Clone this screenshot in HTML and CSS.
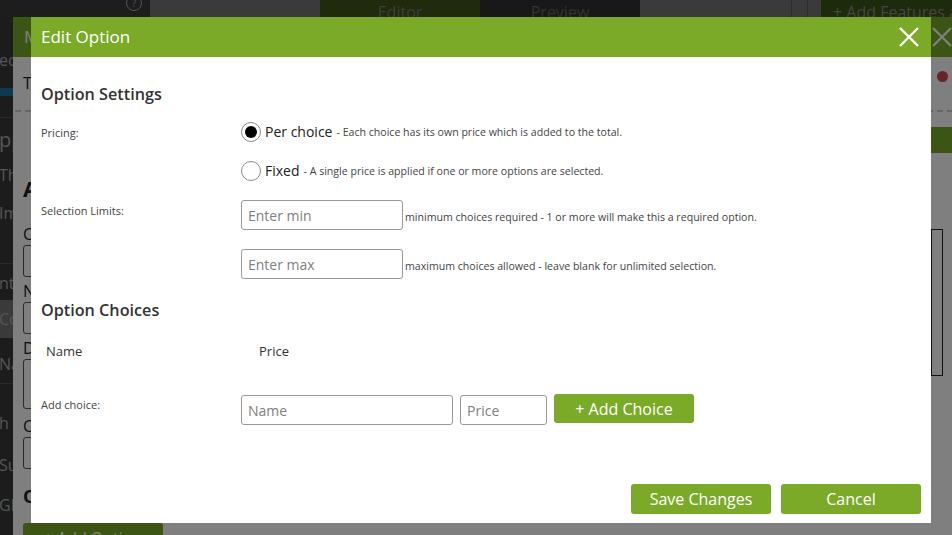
FILE: index.html
```html
<!DOCTYPE html>
<html>
<head>
    <title>Edit Option</title>
    <link rel="stylesheet" href="styles.css">
</head>
<body>
    <div class="app">
        <div class="topbar">
            <div class="brand"><span class="help">?</span></div>
            <div class="tools"></div>
            <div class="tab tab-on">Editor</div>
            <div class="tab">Preview</div>
            <div class="tools tools-split"><span></span><span></span></div>
            <div class="features">+ Add Features and more</div>
        </div>
        <div class="main">
            <div class="sidebar">
                <div class="side-item s-first">ec</div>
                <div class="side-blue"></div>
                <div class="side-line l-first"></div>
                <div class="side-item side-big">pp</div>
                <div class="side-item s-th">Th</div>
                <div class="side-item s-im">Im</div>
                <div class="side-line l-second"></div>
                <div class="side-item s-nt">nt</div>
                <div class="side-item side-on">Co</div>
                <div class="side-item s-na">Na</div>
                <div class="side-line l-third"></div>
                <div class="side-item s-h">h</div>
                <div class="side-item s-su">Su</div>
                <div class="side-item s-gl">Gl</div>
            </div>
        </div>
    </div>

    <!-- the product dialog underneath -->
    <div class="panel">
        <div class="panel-head">
            <span>Manage Product</span>
            <svg class="x-icon" viewBox="0 0 20 20"><path d="M1 1 L19 19 M19 1 L1 19"/></svg>
        </div>
        <div class="panel-body">
            <div class="panel-title">Title <i class="dot"></i></div>
            <div class="dashes"></div>
            <div class="panel-bar"></div>
            <h3>About</h3>
            <p class="p-label">Category</p>
            <div class="p-input"></div>
            <p class="p-label">Name</p>
            <div class="p-input"></div>
            <p class="p-label">Description</p>
            <div class="p-input p-area"></div>
            <p class="p-label">Currency</p>
            <div class="p-input"></div>
            <h4>Options</h4>
            <div class="p-btn">+ Add Option</div>
        </div>
        <div class="panel-box"></div>
    </div>

    <div class="shade"></div>

    <div class="modal">
        <div class="modal-head">
            <span>Edit Option</span>
            <svg class="x-icon" viewBox="0 0 20 20"><path d="M1 1 L19 19 M19 1 L1 19"/></svg>
        </div>
        <div class="modal-body">
            <h2>Option Settings</h2>

            <div class="row">
                <div class="label">Pricing:</div>
                <div class="field">
                    <label class="radio"><span class="dot-radio checked"></span><span class="big">Per choice</span><span class="hint">- Each choice has its own price which is added to the total.</span></label>
                </div>
            </div>
            <div class="row">
                <div class="label"></div>
                <div class="field">
                    <label class="radio"><span class="dot-radio"></span><span class="big">Fixed</span><span class="hint">- A single price is applied if one or more options are selected.</span></label>
                </div>
            </div>
            <div class="row">
                <div class="label">Selection Limits:</div>
                <div class="field">
                    <input class="txt limit" type="text" placeholder="Enter min"><span class="hint">minimum choices required - 1 or more will make this a required option.</span>
                </div>
            </div>
            <div class="row">
                <div class="label"></div>
                <div class="field">
                    <input class="txt limit" type="text" placeholder="Enter max"><span class="hint">maximum choices allowed - leave blank for unlimited selection.</span>
                </div>
            </div>

            <h2 class="choices-title">Option Choices</h2>

            <div class="choice-head">
                <div class="col-name">Name</div>
                <div class="col-price">Price</div>
            </div>

            <div class="row add-row">
                <div class="label">Add choice:</div>
                <div class="field add-field">
                    <input class="txt name" type="text" placeholder="Name">
                    <input class="txt price" type="text" placeholder="Price">
                    <button class="btn add-btn">+ Add Choice</button>
                </div>
            </div>
        </div>
        <div class="modal-foot">
            <button class="btn foot-btn">Save Changes</button>
            <button class="btn foot-btn">Cancel</button>
        </div>
    </div>
</body>
</html>
```

FILE: styles.css
```css
body {
    margin: 0;
    font-family: "Open Sans", "Liberation Sans", sans-serif;
    color: #333;
    background-color: #3a3a3a;
    height: 535px;
    overflow: hidden;
}

/* app behind everything */
.app {
    display: flex;
    flex-direction: column;
    height: 535px;
}
.topbar {
    display: flex;
    height: 17px;
    background-color: #747474;
    overflow: hidden;
}
.topbar > div {
    flex-shrink: 0;
}
.brand {
    width: 150px;
    background-color: #3a3a3a;
    position: relative;
}
.help {
    position: absolute;
    right: 8px;
    top: -5px;
    width: 14px;
    height: 14px;
    border: 1px solid #aaa;
    border-radius: 50%;
    color: #aaa;
    font-size: 10px;
    text-align: center;
    line-height: 14px;
}
.tools {
    width: 170px;
}
.tools-split {
    width: 168px;
    display: flex;
    justify-content: flex-end;
    gap: 15px;
    padding-right: 13px;
}
.tools-split span {
    width: 1px;
    background-color: #5a5a5a;
}
.tab {
    width: 160px;
    text-align: center;
    color: #666;
    font-size: 16px;
    line-height: 24px;
    background-color: #303030;
}
.topbar .features {
    flex: 1;
    flex-shrink: 1;
    background-color: #3c5418;
    color: #8a8a8a;
    font-size: 16px;
    line-height: 24px;
    padding-left: 12px;
    white-space: nowrap;
}
.tab-on {
    background-color: #40541a;
    color: #7a7a7a;
}
.main {
    flex: 1;
    display: flex;
}
.sidebar {
    width: 150px;
    background-color: #383838;
    color: #aaa;
    font-size: 16px;
    padding-top: 33px;
}
.side-item {
    line-height: 20px;
    margin-left: -1px;
}
.side-blue {
    height: 8px;
    background-color: #18749e;
    margin-top: 18px;
}
.side-line {
    height: 1px;
    background-color: #555;
}
.l-first { margin-top: 21px; }
.side-big {
    font-size: 20px;
    line-height: 26px;
    margin-top: 9px;
}
.s-th { margin-top: 12px; }
.s-im { margin-top: 18px; }
.l-second { margin-top: 40px; }
.s-nt { margin-top: 9px; }
.side-on {
    background-color: #747474;
    padding: 9px 0;
    margin-top: 7px;
}
.s-na { margin-top: 16px; }
.l-third { margin-top: 9px; }
.s-h { margin-top: 29px; }
.s-su { margin-top: 22px; }
.s-gl { margin-top: 20px; }

/* product dialog underneath */
.panel {
    position: absolute;
    left: 13px;
    top: 17px;
    width: 960px;
    height: 540px;
    background-color: #fff;
}
.panel-head {
    height: 40px;
    background-color: #7aaa28;
    color: #fff;
    font-size: 17px;
    line-height: 40px;
    padding-left: 11px;
    position: relative;
}
.panel-head .x-icon {
    position: absolute;
    left: 919px;
    top: 10px;
}
.panel-body {
    padding: 15px 10px 0;
    position: relative;
}
.panel-title {
    font-size: 16px;
    color: #222;
    line-height: 22px;
}
.dot {
    position: absolute;
    left: 924px;
    top: 14px;
    width: 11px;
    height: 11px;
    border-radius: 50%;
    background-color: #d04848;
}
.dashes {
    border-top: 2px dashed #ccc;
    margin: 16px 0 0 -8px;
}
.panel-bar {
    position: absolute;
    left: 918px;
    top: 70px;
    width: 40px;
    height: 26px;
    background-color: #7aaa28;
}
.panel-body h3 {
    font-size: 22px;
    line-height: 30px;
    margin: 61px 0 20px;
    color: #222;
}
.p-label {
    margin: 0;
    font-size: 16px;
    line-height: 22px;
    color: #222;
}
.p-input {
    width: 200px;
    height: 30px;
    border: 1px solid #555;
    border-radius: 3px;
    margin-bottom: 3px;
}
.p-area {
    height: 48px;
    margin-bottom: 6px;
}
.panel-body h4 {
    font-size: 18px;
    line-height: 24px;
    margin: 15px 0 15px;
    color: #222;
}
.p-btn {
    width: 140px;
    height: 30px;
    background-color: #7aaa28;
    border-radius: 3px;
    color: #fff;
    font-size: 16px;
    text-align: center;
    line-height: 30px;
}
.panel-box {
    position: absolute;
    left: 918px;
    top: 212px;
    width: 10px;
    height: 145px;
    border: 1px solid #222;
}

.shade {
    position: absolute;
    left: 0;
    top: 0;
    width: 952px;
    height: 535px;
    background-color: rgba(0, 0, 0, 0.5);
}

/* the edit option dialog */
.modal {
    position: absolute;
    left: 31px;
    top: 17px;
    width: 900px;
    height: 506px;
    background-color: #fff;
    display: flex;
    flex-direction: column;
}
.modal-head {
    height: 40px;
    background-color: #7aaa28;
    color: #fff;
    font-size: 17px;
    line-height: 40px;
    padding-left: 10px;
    position: relative;
}
.x-icon {
    width: 20px;
    height: 20px;
    stroke: #fff;
    stroke-width: 2.4;
    fill: none;
}
.modal-head .x-icon {
    position: absolute;
    right: 12px;
    top: 10px;
}
.modal-body {
    flex: 1;
    padding: 0 10px;
}
h2 {
    font-size: 16.2px;
    font-weight: 600;
    line-height: 24px;
    margin: 25px 0 16px;
    color: #333;
}
.choices-title {
    margin: 16px 0 20px;
}
.row {
    display: flex;
    margin-bottom: 19px;
}
.label {
    width: 200px;
    font-size: 11px;
    line-height: 15px;
    padding-top: 3px;
    color: #444;
}
.field {
    flex: 1;
    font-size: 10.6px;
    color: #444;
}
.radio {
    display: flex;
    align-items: center;
    height: 20px;
}
.dot-radio {
    width: 18px;
    height: 18px;
    border: 1px solid #8a8a8a;
    border-radius: 50%;
    position: relative;
    margin-right: 4px;
}
.dot-radio.checked::after {
    content: "";
    position: absolute;
    left: 3px;
    top: 3px;
    width: 12px;
    height: 12px;
    border-radius: 50%;
    background-color: #000;
}
.big {
    font-size: 14px;
    color: #222;
    margin-right: 4px;
    position: relative;
    top: -1px;
}
.hint {
    font-size: 10.6px;
    color: #444;
}
.txt {
    height: 30px;
    box-sizing: border-box;
    border: 1px solid #999;
    border-radius: 3px;
    padding: 0 6px;
    font-family: "Open Sans", "Liberation Sans", sans-serif;
    font-size: 14px;
    color: #333;
}
.txt::placeholder {
    color: #808080;
}
.limit {
    width: 162px;
    margin-right: 2px;
}
.choice-head {
    display: flex;
    font-size: 13px;
    line-height: 18px;
    color: #333;
    margin-bottom: 35px;
}
.col-name {
    width: 195px;
    padding-left: 5px;
}
.col-price {
    padding-left: 18px;
}
.add-row .label {
    padding-top: 2px;
}
.add-field {
    display: flex;
    align-items: flex-start;
    gap: 7px;
}
.name {
    width: 212px;
}
.price {
    width: 87px;
}
.btn {
    background-color: #7aaa28;
    color: #fff;
    border: none;
    border-radius: 3px;
    font-family: "Open Sans", "Liberation Sans", sans-serif;
    font-size: 16px;
    cursor: pointer;
}
.add-btn {
    width: 140px;
    height: 29px;
    margin-top: -1px;
}
.modal-foot {
    display: flex;
    justify-content: flex-end;
    gap: 10px;
    padding: 0 10px 9px;
}
.foot-btn {
    width: 140px;
    height: 30px;
}
```
